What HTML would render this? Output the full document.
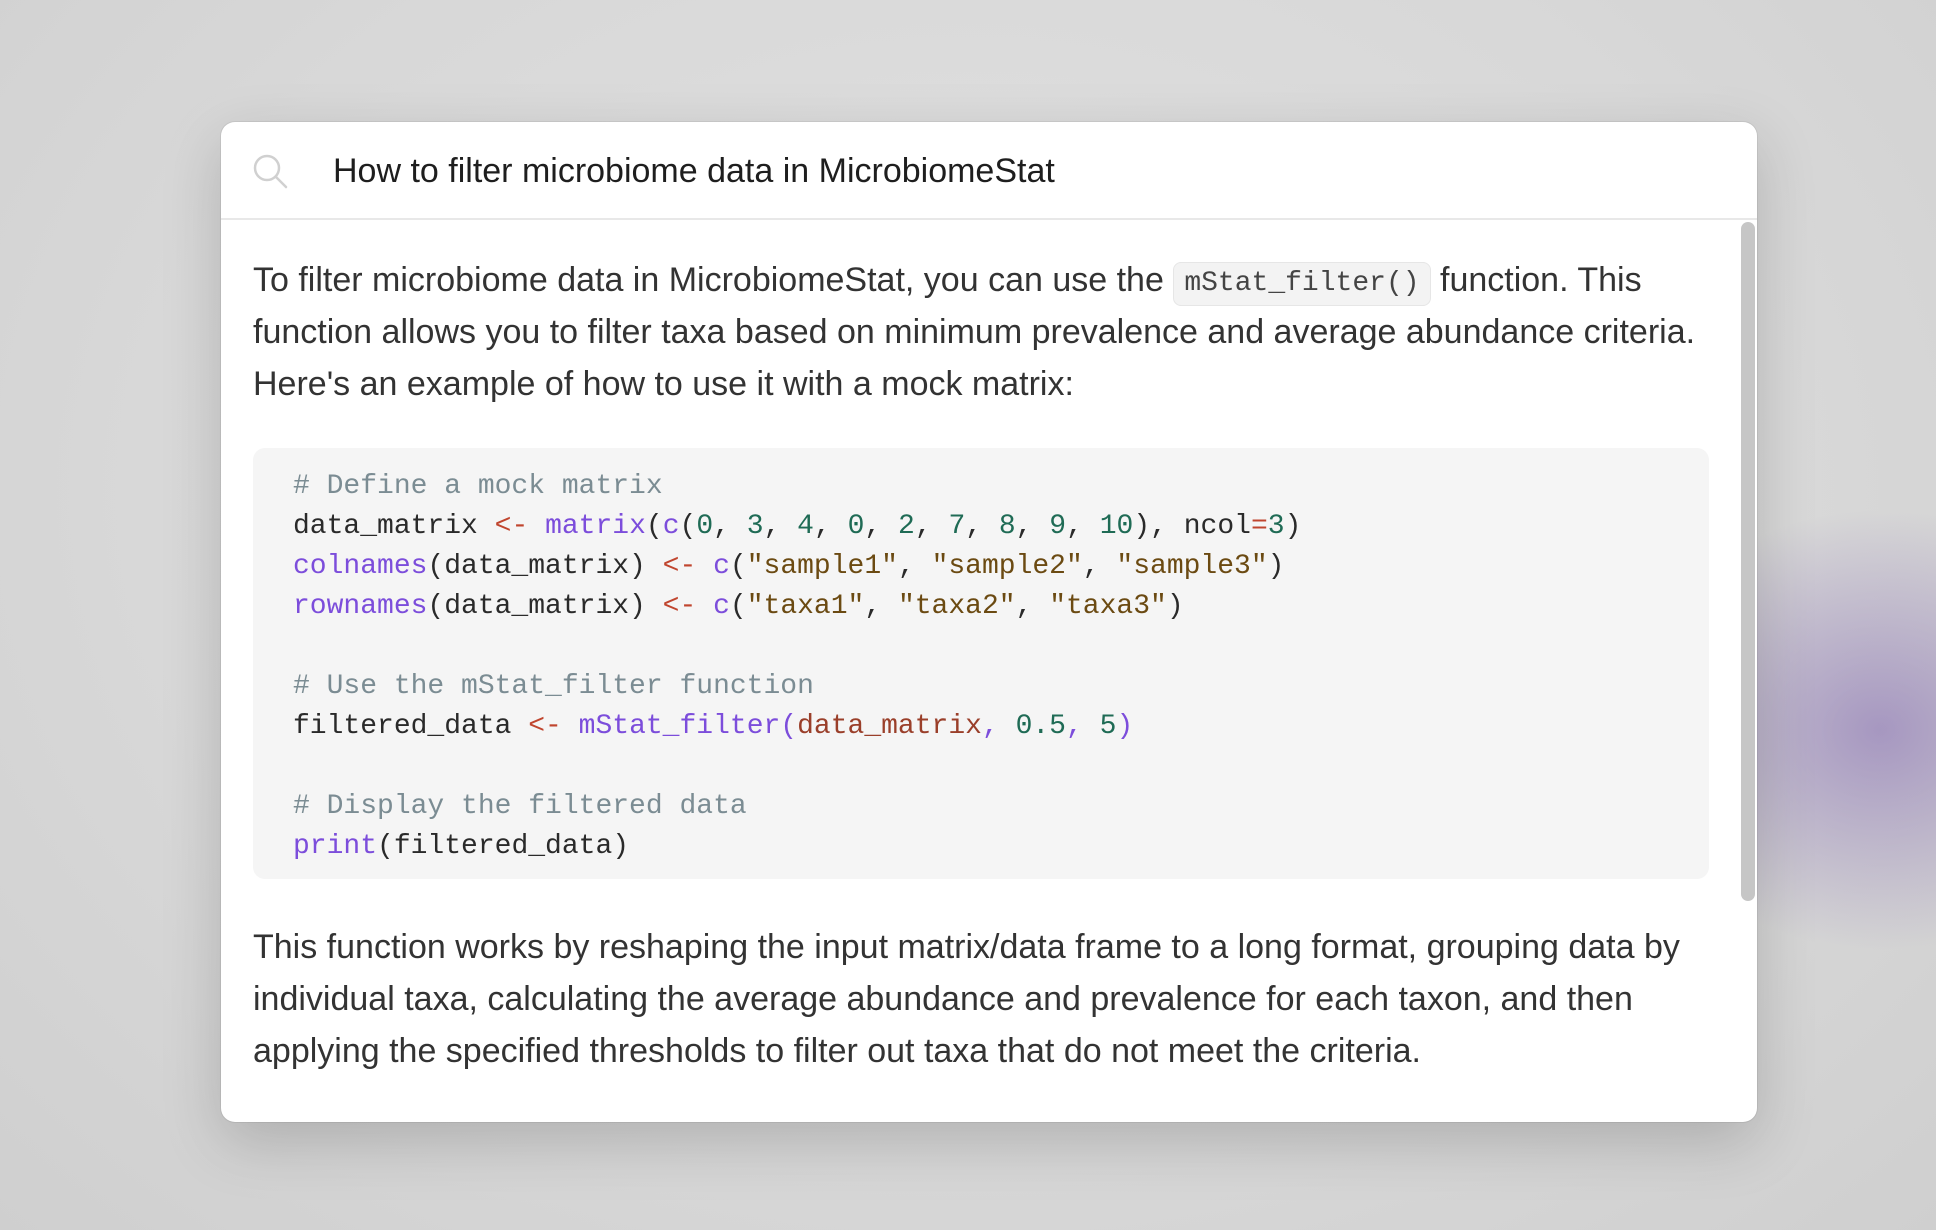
<!DOCTYPE html>
<html><head><meta charset="utf-8"><style>
html,body{margin:0;padding:0}
body{width:1936px;height:1230px;overflow:hidden;position:relative;
background:radial-gradient(ellipse 260px 220px at 1880px 730px,rgba(150,130,185,0.75),rgba(150,130,185,0) 100%),
radial-gradient(ellipse at 50% 40%,#e2e2e2 0%,#d8d8d8 60%,#cfcfcf 100%);
font-family:"Liberation Sans",sans-serif;}
.card{position:absolute;left:221px;top:122px;width:1536px;height:1000px;background:#fff;border-radius:14px;
box-shadow:0 20px 60px rgba(0,0,0,0.18),0 0 0 1px rgba(0,0,0,0.06);overflow:hidden}
.search{height:96px;border-bottom:2px solid #e8e8e8;position:relative}
.search svg{position:absolute;left:30px;top:30px}
.search .q{position:absolute;left:112px;top:29px;font-size:34px;color:#1e1e1e;line-height:40px}
.sb{position:absolute;left:1520px;top:100px;width:14px;height:679px;background:#c6c6c6;border-radius:7px}
.body{position:absolute;left:32px;top:98px;width:1480px;color:#333;}
p{margin:0;font-size:34px;line-height:52px}
.p1{position:absolute;top:34px;left:0;width:1480px}
.ic{display:inline-block;line-height:38px;vertical-align:1px;font-family:"Liberation Mono",monospace;font-size:28px;background:#f3f3f3;border:1px solid #e6e6e6;border-radius:8px;padding:2px 10px;color:#444}
.code{position:absolute;left:0;top:228px;width:1456px;height:431px;background:#f5f5f5;border-radius:12px;
font-family:"Liberation Mono",monospace;font-size:28px;line-height:40px;white-space:pre;padding:19px 0 0 40px;box-sizing:border-box;color:#2a2a2a}
.c{color:#7b8c93}.k{color:#7c4ddb}.o{color:#c0452e}.n{color:#1f6b55}.s{color:#6b4a12}.a{color:#9a3f2a}
.p2{position:absolute;top:701px;left:0;width:1480px}
</style></head><body>
<div class="card">
<div class="search">
<svg width="40" height="40" viewBox="0 0 40 40"><circle cx="16" cy="16" r="12" fill="none" stroke="#d0d0d0" stroke-width="2.5"/><line x1="25" y1="25" x2="35" y2="35" stroke="#d0d0d0" stroke-width="2.5" stroke-linecap="round"/></svg>
<div class="q">How to filter microbiome data in MicrobiomeStat</div>
</div>
<div class="sb"></div>
<div class="body">
<p class="p1">To filter microbiome data in MicrobiomeStat, you can use the <span class="ic">mStat_filter()</span> function. This function allows you to filter taxa based on minimum prevalence and average abundance criteria. Here's an example of how to use it with a mock matrix:</p>
<div class="code"><span class="c"># Define a mock matrix</span>
data_matrix <span class="o">&lt;-</span> <span class="k">matrix</span>(<span class="k">c</span>(<span class="n">0</span>, <span class="n">3</span>, <span class="n">4</span>, <span class="n">0</span>, <span class="n">2</span>, <span class="n">7</span>, <span class="n">8</span>, <span class="n">9</span>, <span class="n">10</span>), ncol<span class="o">=</span><span class="n">3</span>)
<span class="k">colnames</span>(data_matrix) <span class="o">&lt;-</span> <span class="k">c</span>(<span class="s">"sample1"</span>, <span class="s">"sample2"</span>, <span class="s">"sample3"</span>)
<span class="k">rownames</span>(data_matrix) <span class="o">&lt;-</span> <span class="k">c</span>(<span class="s">"taxa1"</span>, <span class="s">"taxa2"</span>, <span class="s">"taxa3"</span>)

<span class="c"># Use the mStat_filter function</span>
filtered_data <span class="o">&lt;-</span> <span class="k">mStat_filter(</span><span class="a">data_matrix</span><span class="k">,</span> <span class="n">0.5</span><span class="k">,</span> <span class="n">5</span><span class="k">)</span>

<span class="c"># Display the filtered data</span>
<span class="k">print</span>(filtered_data)</div>
<p class="p2">This function works by reshaping the input matrix/data frame to a long format, grouping data by individual taxa, calculating the average abundance and prevalence for each taxon, and then applying the specified thresholds to filter out taxa that do not meet the criteria.</p>
</div>
</div>
</body></html>
